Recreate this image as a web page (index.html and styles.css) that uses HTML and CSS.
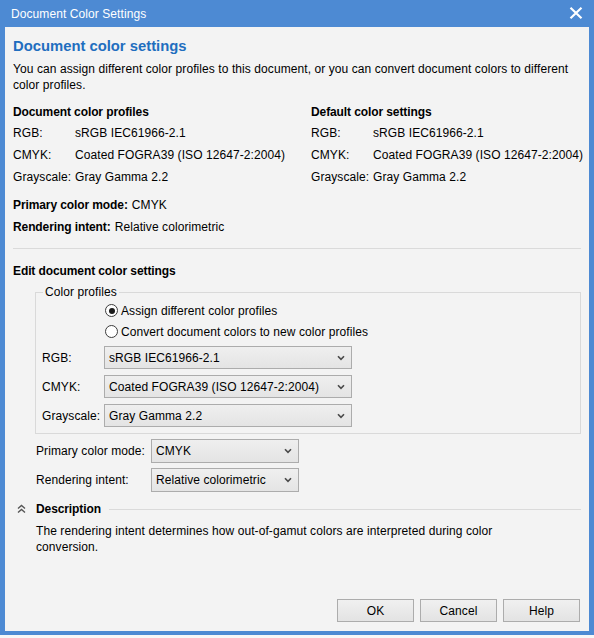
FILE: index.html
```html
<!DOCTYPE html>
<html lang="en">
<head>
<meta charset="utf-8">
<title>Document Color Settings</title>
<link rel="stylesheet" href="styles.css">
</head>
<body>
<div class="window">
  <div class="titlebar">
    <span class="title">Document Color Settings</span>
    <svg class="close" width="14" height="12" viewBox="0 0 14 12"><path d="M1.5 0.8 L12.5 11.2 M12.5 0.8 L1.5 11.2" stroke="#fff" stroke-width="2.2" fill="none"/></svg>
  </div>
  <div class="content">
    <h1 class="heading">Document color settings</h1>
    <p class="intro">You can assign different color profiles to this document, or you can convert document colors to different color profiles.</p>

    <div class="profiles">
      <div class="col">
        <h2 class="subhead">Document color profiles</h2>
        <div class="kv">
          <span>RGB:</span><span>sRGB IEC61966-2.1</span>
          <span>CMYK:</span><span>Coated FOGRA39 (ISO 12647-2:2004)</span>
          <span>Grayscale:</span><span>Gray Gamma 2.2</span>
        </div>
      </div>
      <div class="col">
        <h2 class="subhead">Default color settings</h2>
        <div class="kv">
          <span>RGB:</span><span>sRGB IEC61966-2.1</span>
          <span>CMYK:</span><span>Coated FOGRA39 (ISO 12647-2:2004)</span>
          <span>Grayscale:</span><span>Gray Gamma 2.2</span>
        </div>
      </div>
    </div>

    <div class="modes">
      <div class="mode-row"><b>Primary color mode:</b><span>CMYK</span></div>
      <div class="mode-row"><b>Rendering intent:</b><span>Relative colorimetric</span></div>
    </div>

    <div class="separator"></div>

    <h2 class="subhead edit">Edit document color settings</h2>

    <fieldset class="group">
      <legend>Color profiles</legend>
      <label class="radio-row"><input type="radio" name="mode" checked><span>Assign different color profiles</span></label>
      <label class="radio-row"><input type="radio" name="mode"><span>Convert document colors to new color profiles</span></label>
      <div class="select-grid">
        <span class="lbl">RGB:</span>
        <div class="select wide"><span>sRGB IEC61966-2.1</span><svg width="8" height="6" viewBox="0 0 8 6"><path d="M1 1.2 L4 4.4 L7 1.2" stroke="#4a4a4a" stroke-width="1.6" fill="none"/></svg></div>
        <span class="lbl">CMYK:</span>
        <div class="select wide"><span>Coated FOGRA39 (ISO 12647-2:2004)</span><svg width="8" height="6" viewBox="0 0 8 6"><path d="M1 1.2 L4 4.4 L7 1.2" stroke="#4a4a4a" stroke-width="1.6" fill="none"/></svg></div>
        <span class="lbl">Grayscale:</span>
        <div class="select wide"><span>Gray Gamma 2.2</span><svg width="8" height="6" viewBox="0 0 8 6"><path d="M1 1.2 L4 4.4 L7 1.2" stroke="#4a4a4a" stroke-width="1.6" fill="none"/></svg></div>
      </div>
    </fieldset>

    <div class="mode-grid">
      <span class="lbl">Primary color mode:</span>
      <div class="select narrow"><span>CMYK</span><svg width="8" height="6" viewBox="0 0 8 6"><path d="M1 1.2 L4 4.4 L7 1.2" stroke="#4a4a4a" stroke-width="1.6" fill="none"/></svg></div>
      <span class="lbl">Rendering intent:</span>
      <div class="select narrow"><span>Relative colorimetric</span><svg width="8" height="6" viewBox="0 0 8 6"><path d="M1 1.2 L4 4.4 L7 1.2" stroke="#4a4a4a" stroke-width="1.6" fill="none"/></svg></div>
    </div>

    <div class="desc-head">
      <svg class="collapse" width="9" height="10" viewBox="0 0 9 10"><path d="M1 4.5 L4.5 1.5 L8 4.5 M1 8.5 L4.5 5.5 L8 8.5" stroke="#555" stroke-width="1.4" fill="none"/></svg>
      <b>Description</b>
      <span class="rule"></span>
    </div>
    <p class="desc">The rendering intent determines how out-of-gamut colors are interpreted during color conversion.</p>

    <div class="buttons">
      <button class="btn">OK</button>
      <button class="btn">Cancel</button>
      <button class="btn">Help</button>
    </div>
  </div>
</div>
</body>
</html>
```

FILE: styles.css
```css
html, body {
  margin: 0;
  padding: 0;
}
body {
  background: #f7f7f7;
  font-family: "Liberation Sans", Arial, sans-serif;
  font-size: 12px;
  letter-spacing: 0.08px;
  color: #000;
}
b, .subhead {
  letter-spacing: -0.1px;
}
.window {
  width: 594px;
  height: 635px;
  box-sizing: border-box;
  background: #4d8ad3;
  padding: 0 5px 4px 5px;
  display: flex;
  flex-direction: column;
}
.titlebar {
  height: 27px;
  flex: none;
  display: flex;
  align-items: center;
  justify-content: space-between;
  padding: 0 6px;
  color: #fff;
}
.title {
  font-size: 12px;
  line-height: 16px;
  margin-top: 1px;
}
.close {
  display: block;
  margin-top: -1px;
}
.content {
  flex: 1;
  background: #f3f3f3;
  padding: 9px 8px 9px 8px;
  display: flex;
  flex-direction: column;
}
.heading {
  margin: 0;
  font-size: 14.8px;
  line-height: 20px;
  font-weight: bold;
  letter-spacing: 0;
  color: #1f6ebf;
}
.intro {
  margin: 5px 0 0;
  line-height: 16px;
}
.profiles {
  display: grid;
  grid-template-columns: 298px 1fr;
  margin-top: 9px;
}
.subhead {
  margin: 0;
  font-size: 12px;
  line-height: 20px;
  font-weight: bold;
}
.kv {
  display: grid;
  grid-template-columns: 62px 1fr;
  line-height: 22px;
  white-space: nowrap;
}
.modes {
  margin-top: 6px;
}
.mode-row {
  line-height: 22px;
  display: flex;
  gap: 4px;
}
.separator {
  margin-top: 10px;
  height: 1px;
  background: #dadada;
}
.subhead.edit {
  margin-top: 12px;
}
.group {
  margin: 3px 0 0 22px;
  padding: 0 0 6px 0;
  border: 1px solid #d9d9d9;
  min-width: 0;
}
.group legend {
  margin-left: 7px;
  padding: 0 2px;
  line-height: 16px;
}
.radio-row {
  display: flex;
  align-items: center;
  height: 21px;
  padding-left: 69px;
}
.radio-row input {
  appearance: none;
  -webkit-appearance: none;
  margin: 0 3px 0 0;
  width: 13px;
  height: 13px;
  border: 1px solid #3c3c3c;
  border-radius: 50%;
  background: #fff;
  box-sizing: border-box;
  position: relative;
}
.radio-row input:checked::after {
  content: "";
  position: absolute;
  left: 2.5px;
  top: 2.5px;
  width: 6px;
  height: 6px;
  border-radius: 50%;
  background: #1a1a1a;
}
.select-grid {
  display: grid;
  grid-template-columns: 62px 248px;
  row-gap: 6px;
  align-items: center;
  margin-top: 4px;
  padding-left: 6px;
}
.select {
  height: 23px;
  box-sizing: border-box;
  border: 1px solid #acacac;
  background: linear-gradient(#efefef, #e4e4e4);
  display: flex;
  align-items: center;
  justify-content: space-between;
  padding: 0 6px 0 4px;
  white-space: nowrap;
}
.select svg {
  display: block;
}
.mode-grid {
  display: grid;
  grid-template-columns: 115px 148px;
  row-gap: 5px;
  align-items: center;
  margin: 5px 0 0 23px;
}
.select.narrow {
  height: 24px;
}
.desc-head {
  display: flex;
  align-items: center;
  height: 16px;
  margin-top: 9px;
  padding-left: 4px;
}
.collapse {
  display: block;
  margin-right: 10px;
}
.rule {
  flex: 1;
  height: 1px;
  background: #dadada;
  margin-left: 8px;
}
.desc {
  margin: 6px 0 0 23px;
  max-width: 490px;
  line-height: 16px;
}
.buttons {
  margin-top: auto;
  display: flex;
  justify-content: flex-end;
  gap: 6px;
  padding-right: 1px;
}
.btn {
  width: 77px;
  height: 23px;
  box-sizing: border-box;
  border: 1px solid #acacac;
  background: linear-gradient(#f0f0f0, #e3e3e3);
  font-family: "Liberation Sans", Arial, sans-serif;
  font-size: 12px;
  letter-spacing: 0.08px;
  color: #000;
  padding: 0;
}
```
